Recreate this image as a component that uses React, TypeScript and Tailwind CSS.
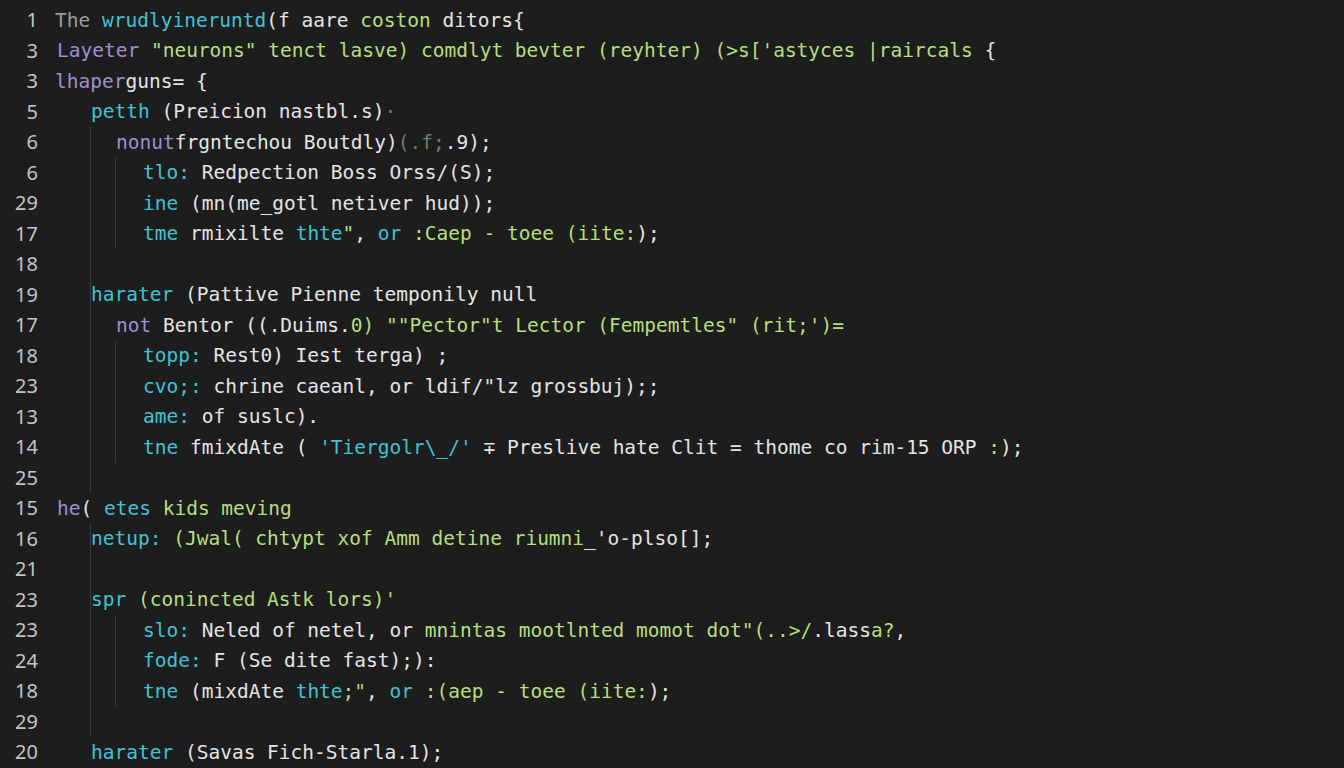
import React from "react";

type Tok = [string, string];

const C: Record<string, string> = {
  w: "text-[#e4e4e4]",
  g: "text-[#9c9c9c]",
  c: "text-[#3fc3d3]",
  p: "text-[#9f8fd0]",
  l: "text-[#b7df7c]",
  d: "text-[#6f7f6a]",
};

function Row({ toks, pl = "pl-0" }: { toks: Tok[]; pl?: string }) {
  return (
    <div className={`h-[30.5px] flex items-center whitespace-pre ${pl}`}>
      {toks.map(([k, t], i) => (
        <span key={i} className={C[k]}>
          {t}
        </span>
      ))}
    </div>
  );
}

const nums = [
  "1", "3", "3", "5", "6", "6", "29", "17", "18", "19", "17", "18", "23",
  "13", "14", "25", "15", "16", "21", "23", "23", "24", "18", "29", "20",
];

export default function App() {
  return (
    <div className="w-[1344px] h-[768px] overflow-hidden bg-[#1d1d1e] flex pt-[5px] font-['DejaVu_Sans_Mono',monospace] text-[19.5px]">
      <div className="w-[38px] shrink-0 flex flex-col items-end font-['Noto_Sans',sans-serif] text-[20px] text-[#c4c4c4]">
        {nums.map((n, i) => (
          <div key={i} className="h-[30.5px] flex items-center">
            {n}
          </div>
        ))}
      </div>
      <div className="ml-[17px] flex flex-col flex-1">
        <Row
          toks={[
            ["g", "The "],
            ["c", "wrudlyineruntd"],
            ["w", "(f aare "],
            ["l", "coston "],
            ["w", "ditors{"],
          ]}
        />
        <Row
          pl="pl-[2px]"
          toks={[
            ["p", "Layeter "],
            ["l", "\"neurons\" tenct lasve) comdlyt bevter (reyhter) (>s['astyces |raircals"],
            ["w", " {"],
          ]}
        />
        <Row toks={[["p", "lhaper"], ["w", "guns= {"]]} />
        <Row pl="pl-[36px]" toks={[["c", "petth"], ["w", " (Preicion nastbl.s)"], ["d", "·"]]} />
        <div className="ml-[35px] border-l border-[#3a3a3a]">
          <Row
            pl="pl-[25px]"
            toks={[
              ["p", "nonut"],
              ["w", "frgntechou Boutdly)"],
              ["d", "(.f;"],
              ["w", ".9);"],
            ]}
          />
          <div className="ml-[24px] border-l border-[#3a3a3a]">
            <Row pl="pl-[27px]" toks={[["c", "tlo:"], ["w", " Redpection Boss Orss/(S);"]]} />
            <Row pl="pl-[27px]" toks={[["c", "ine"], ["w", " (mn(me_gotl netiver hud));"]]} />
            <Row
              pl="pl-[27px]"
              toks={[
                ["c", "tme"],
                ["w", " rmixilte "],
                ["c", "thte"],
                ["l", "\""],
                ["w", ", "],
                ["c", "or"],
                ["l", " :Caep - toee (iite:"],
                ["w", ");"],
              ]}
            />
          </div>
          <Row toks={[]} />
          <Row toks={[["c", "harater"], ["w", " (Pattive Pienne temponily null"]]} />
          <Row
            pl="pl-[25px]"
            toks={[
              ["p", "not"],
              ["w", " Bentor ((.Duims."],
              ["l", "0) \"\"Pector\"t Lector (Fempemtles\" (rit;')="],
            ]}
          />
          <div className="ml-[24px] border-l border-[#3a3a3a]">
            <Row pl="pl-[27px]" toks={[["c", "topp:"], ["w", " Rest0) Iest terga) ;"]]} />
            <Row pl="pl-[27px]" toks={[["c", "cvo;:"], ["w", " chrine caeanl, or ldif/\"lz grossbuj);;"]]} />
            <Row pl="pl-[27px]" toks={[["c", "ame:"], ["w", " of suslc)."]]} />
            <Row
              pl="pl-[27px]"
              toks={[
                ["c", "tne"],
                ["w", " fmixdAte ( "],
                ["c", "'Tiergolr\\_/'"],
                ["w", " ∓ Preslive hate Clit = thome co rim-15 ORP "],
                ["l", ":"],
                ["w", ");"],
              ]}
            />
          </div>
          <Row toks={[]} />
        </div>
        <Row
          pl="pl-[2px]"
          toks={[
            ["p", "he"],
            ["w", "( "],
            ["c", "etes "],
            ["l", "kids meving"],
          ]}
        />
        <div className="ml-[35px] border-l border-[#3a3a3a]">
          <Row
            toks={[
              ["c", "netup:"],
              ["l", " (Jwal( chtypt xof Amm detine riumni"],
              ["w", "_'o-plso[];"],
            ]}
          />
          <Row toks={[]} />
          <Row toks={[["c", "spr"], ["l", " (conincted Astk lors)'"]]} />
          <div className="ml-[24px] border-l border-[#3a3a3a]">
            <Row
              pl="pl-[27px]"
              toks={[
                ["c", "slo:"],
                ["w", " Neled of netel, or "],
                ["l", "mnintas mootlnted momot dot\"(..>/"],
                ["w", ".lass"],
                ["l", "a?"],
                ["w", ","],
              ]}
            />
            <Row pl="pl-[27px]" toks={[["c", "fode:"], ["w", " F (Se dite fast);):"]]} />
            <Row
              pl="pl-[27px]"
              toks={[
                ["c", "tne"],
                ["w", " (mixdAte "],
                ["c", "thte"],
                ["l", ";\""],
                ["w", ", "],
                ["c", "or"],
                ["l", " :(aep - toee (iite:"],
                ["w", ");"],
              ]}
            />
          </div>
          <Row toks={[]} />
        </div>
        <Row pl="pl-[36px]" toks={[["c", "harater"], ["w", " (Savas Fich-Starla.1);"]]} />
      </div>
    </div>
  );
}
